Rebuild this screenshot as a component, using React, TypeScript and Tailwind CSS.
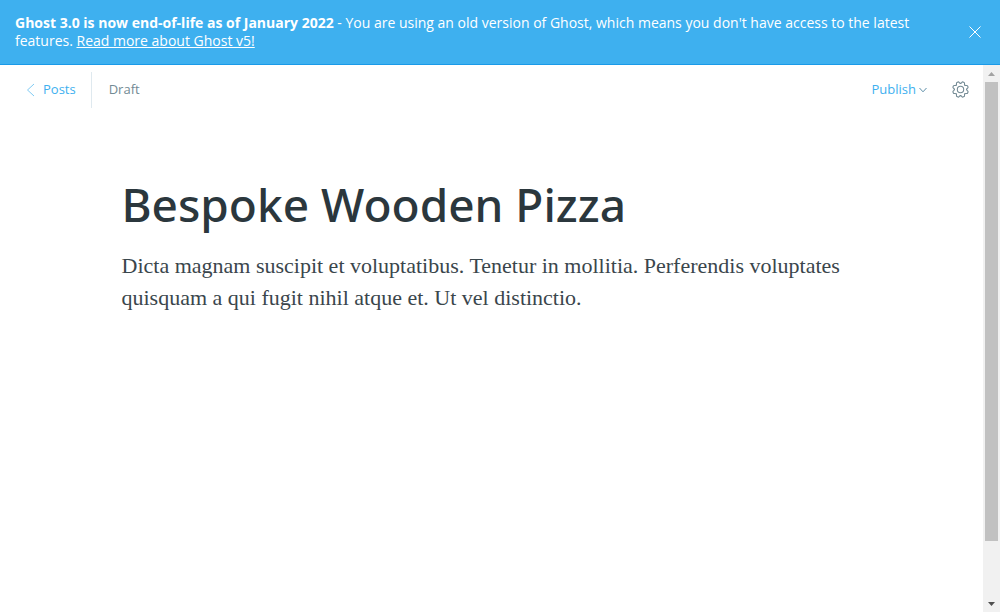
import React from "react";

const TOOTH = "M-3.29 -7.95C-2.4 -8.3 -2.3 -9 -2.1 -9.8Q-1.800 -11.200 -.8 -11.200H.8Q1.800 -11.200 2.100 -9.800C2.300 -9 2.400 -8.300 3.290 -7.950";
const TOOTH_ANGLES = [22.5, 67.5, 112.5, 157.5, 202.5, 247.5, 292.5, 337.5];

function GearIcon() {
  return (
    <svg viewBox="-12 -12 24 24" className="size-[17px]" fill="none" stroke="#738a94" strokeWidth="1.5" strokeLinecap="round" strokeLinejoin="round" aria-hidden="true">
      <circle r="4.5" />
      {TOOTH_ANGLES.map((angle) => (
        <path key={angle} d={TOOTH} transform={`rotate(${angle})`} />
      ))}
    </svg>
  );
}

function Banner() {
  return (
    <aside className="flex shrink-0 items-center justify-between border-b border-[#1a9ae8] bg-[#3eb0ef] px-[15px] py-[14px] text-white">
      <p className="max-w-[900px] text-[14px] leading-[18px]">
        <b className="font-bold">Ghost 3.0 is now end-of-life as of January 2022</b> - You are using an old version of Ghost, which means you don't have access to the latest features.{" "}
        <a href="#upgrade" className="underline">Read more about Ghost v5!</a>
      </p>
      <button type="button" aria-label="Close" className="flex size-5 items-center justify-center">
        <svg viewBox="0 0 12 12" className="size-3" fill="none" stroke="currentColor" strokeWidth="1" aria-hidden="true">
          <path d="M.5.5l11 11M11.5.5l-11 11" />
        </svg>
      </button>
    </aside>
  );
}

function Toolbar() {
  return (
    <header className="flex h-[49px] items-center justify-between pr-[14px] pl-[26px] text-[13px]">
      <div className="flex items-center">
        <a href="#posts" className="flex h-9 items-center gap-2 border-r border-[#dfe9ef] pr-[15px] text-[#3eb0ef]">
          <svg viewBox="0 0 9 14" className="h-[14px] w-[9px]" fill="none" stroke="#7fcbf4" strokeWidth="1" aria-hidden="true">
            <path d="M8 1L1.500 7L8 13" />
          </svg>
          Posts
        </a>
        <span className="pl-[17px] text-[#738a94]">Draft</span>
      </div>
      <div className="flex items-center gap-[25px]">
        <button type="button" className="flex items-center gap-[3px] text-[#3eb0ef]">
          Publish
          <svg viewBox="0 0 8 6" className="h-[6px] w-2" fill="none" stroke="#5d8ea8" strokeWidth="1" aria-hidden="true">
            <path d="M.5 1L4 4.800L7.500 1" />
          </svg>
        </button>
        <button type="button" aria-label="Settings">
          <GearIcon />
        </button>
      </div>
    </header>
  );
}

function Scrollbar() {
  return (
    <div aria-hidden="true" className="flex w-[17px] shrink-0 flex-col items-center bg-[#f1f1f1]">
      <div className="flex h-[17px] shrink-0 items-center">
        <svg viewBox="0 0 7 4" className="h-1 w-[7px]" fill="#a3a3a3"><path d="M0 4L3.500 0L7 4z" /></svg>
      </div>
      <div className="w-full flex-1 px-0.5">
        <div className="h-[89.5%] bg-[#c1c1c1]" />
      </div>
      <div className="flex h-[17px] shrink-0 items-center">
        <svg viewBox="0 0 7 4" className="h-1 w-[7px]" fill="#505050"><path d="M0 0L3.500 4L7 0z" /></svg>
      </div>
    </div>
  );
}

export default function App() {
  return (
    <div className="flex h-screen flex-col bg-white font-['Open_Sans','Noto_Sans',sans-serif]">
      <Banner />
      <div className="flex min-h-0 flex-1">
        <main className="min-w-0 flex-1">
          <Toolbar />
          <article className="mx-auto max-w-[740px] pt-[58px]">
            <input
              type="text"
              aria-label="Post title"
              defaultValue="Bespoke Wooden Pizza"
              className="block h-[64px] w-full font-['Noto_Sans','Open_Sans',sans-serif] text-[46px] leading-[64px] font-medium text-[#2b373d] outline-none"
            />
            <div
              role="textbox"
              aria-label="Post content"
              aria-multiline="true"
              contentEditable
              suppressContentEditableWarning
              className="pt-[14px] font-['Georgia','Liberation_Serif',serif] text-[22px] leading-8 text-[#3a464c] outline-none"
            >
              <p>Dicta magnam suscipit et voluptatibus. Tenetur in mollitia. Perferendis voluptates quisquam a qui fugit nihil atque et. Ut vel distinctio.</p>
            </div>
          </article>
        </main>
        <Scrollbar />
      </div>
    </div>
  );
}
